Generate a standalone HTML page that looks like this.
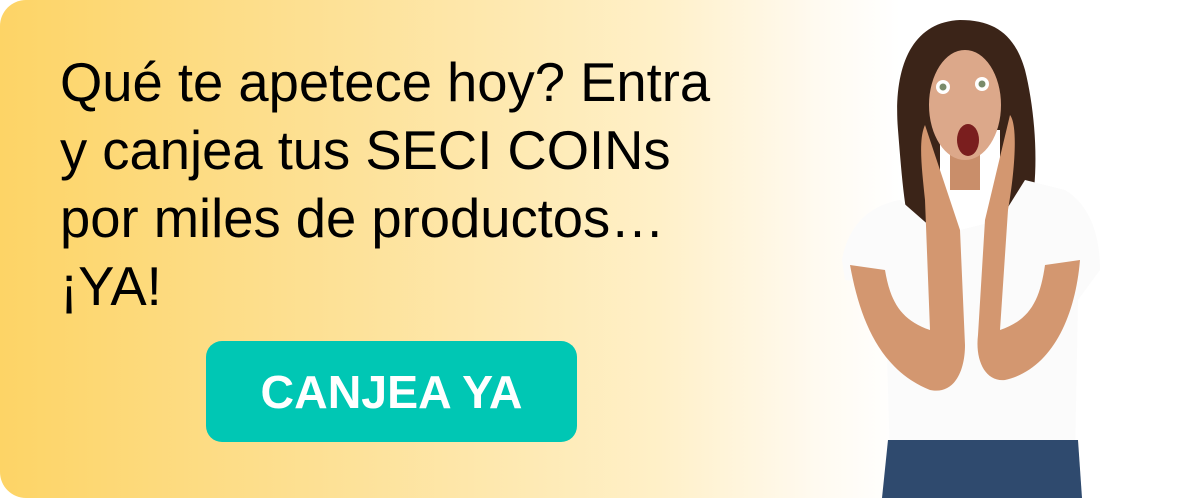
<!DOCTYPE html>
<html><head><meta charset="utf-8"><style>
html,body{margin:0;padding:0;background:#fff;}
body{width:1200px;height:498px;position:relative;overflow:hidden;font-family:"Liberation Sans",Arial,sans-serif;}
.card{position:absolute;left:0;top:0;width:1200px;height:498px;border-radius:26px;background:linear-gradient(90deg,#fdd466 0%,#fde29a 30%,#fff0c8 55%,#fffaf0 68%,#ffffff 75%);}
.txt{position:absolute;left:60px;top:49px;font-size:54.4px;line-height:68px;color:#000;white-space:nowrap;}
.btn{position:absolute;left:206px;top:341px;width:371px;height:101px;border-radius:16px;background:#00c7b4;color:#fff;font-weight:bold;font-size:46.5px;display:flex;align-items:center;justify-content:center;}
svg{position:absolute;left:0;top:0;}
</style></head><body>
<div class="card"></div>
<div class="txt">Qué te apetece hoy? Entra<br>y canjea tus SECI COINs<br>por miles de productos…<br>¡YA!</div>
<div class="btn">CANJEA YA</div>
<svg width="1200" height="498" viewBox="0 0 1200 498">
 <path d="M960 20 C910 22 893 70 898 130 C902 180 905 220 915 245 L940 240 L940 130 L1000 130 L1000 230 L1030 215 C1040 170 1035 110 1025 70 C1015 35 995 20 960 20Z" fill="#3b2418"/>
 <path d="M900 200 C870 205 848 225 842 260 L845 280 L885 285 L890 460 L1075 460 L1078 300 L1100 270 C1100 235 1090 205 1065 190 L1025 180 L1000 220 L940 235 Z" fill="#fbfbfb"/>
 <path d="M888 440 L1078 440 L1082 498 L882 498 Z" fill="#2f4a6e"/>
 <rect x="950" y="150" width="30" height="40" fill="#c98e6a"/>
 <ellipse cx="965" cy="105" rx="36" ry="55" fill="#dca88a"/>
 <circle cx="943" cy="87" r="7" fill="#fff"/><circle cx="943" cy="87" r="3.5" fill="#7a8b6a"/>
 <circle cx="982" cy="84" r="7" fill="#fff"/><circle cx="982" cy="84" r="3.5" fill="#7a8b6a"/>
 <ellipse cx="968" cy="140" rx="11" ry="16" fill="#7a1e1e"/>
 <path d="M850 265 C860 320 880 370 930 390 C955 395 965 370 965 345 L960 230 L925 125 C918 140 922 170 925 200 L930 330 C900 320 890 300 885 270 Z" fill="#d39770"/>
 <path d="M1080 260 C1075 320 1050 370 1005 380 C985 382 975 360 978 335 L985 220 L1010 115 C1018 125 1015 170 1008 210 L1000 330 C1030 320 1040 300 1045 265 Z" fill="#d39770"/>
</svg>
</body></html>
